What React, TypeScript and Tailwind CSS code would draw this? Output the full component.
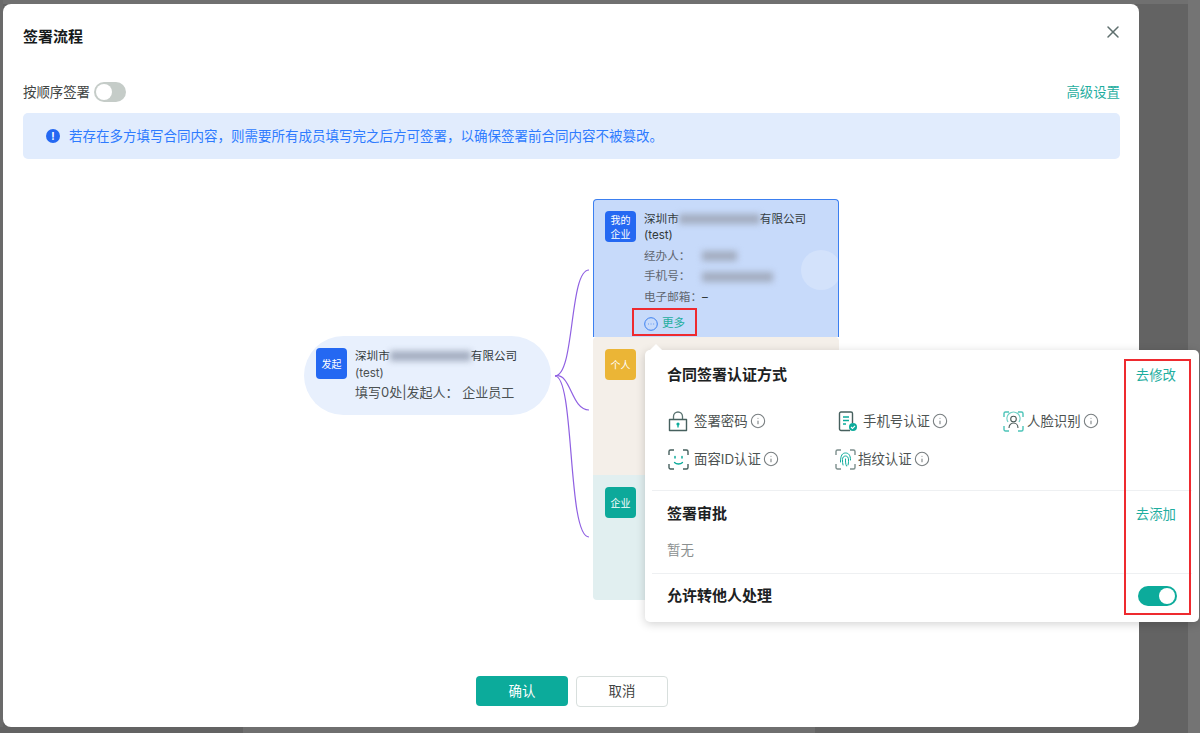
import { Info, X } from "lucide-react";
import type { ReactNode } from "react";

const FONT = "font-['Inter','Noto_Sans_CJK_SC',sans-serif]";

function Blur({ w }: { w: string }) {
  return <span className={`inline-block h-[10px] bg-[#a3adc0] blur-[3px] ${w}`} />;
}

function Badge({ color, children }: { color: string; children: ReactNode }) {
  return (
    <div className={`flex h-[31px] w-[31px] shrink-0 items-center justify-center rounded-[4px] text-center text-[10px] leading-[14px] text-white ${color}`}>
      {children}
    </div>
  );
}

function LockIcon() {
  return (
    <svg width="20" height="21" viewBox="0 0 20 21" fill="none">
      <path d="M5.5 8V5.5a4.500 4.500 0 0 1 9 0V8" stroke="#5b7472" strokeWidth="1.3" />
      <path d="M1.500 8.500h17v11h-17z" stroke="#46605e" strokeWidth="1.4" strokeLinejoin="round" />
      <circle cx="10" cy="13" r="1.600" fill="#0cab9b" />
      <path d="M10 13.500v3" stroke="#0cab9b" strokeWidth="1.4" />
    </svg>
  );
}

function DocIcon() {
  return (
    <svg width="20" height="21" viewBox="0 0 20 21" fill="none">
      <path d="M12 19.500H3a1.500 1.500 0 0 1-1.500-1.500V2.500A1.500 1.500 0 0 1 3 1h10a1.500 1.500 0 0 1 1.500 1.500V12" stroke="#46605e" strokeWidth="1.4" />
      <path d="M5 6h6M5 9.500h6M5 13h3" stroke="#0cab9b" strokeWidth="1.3" />
      <circle cx="15" cy="16" r="4" fill="#0cab9b" />
      <path d="M13 16l1.500 1.400 2.500-2.600" stroke="#fff" strokeWidth="1.100" />
    </svg>
  );
}

function Brackets({ color }: { color: string }) {
  return (
    <path
      d="M1 6V2.500A1.500 1.500 0 0 1 2.500 1H6M15 1h3.500A1.500 1.500 0 0 1 20 2.500V6M20 15v3.500a1.500 1.500 0 0 1-1.500 1.500H15M6 20H2.500A1.500 1.500 0 0 1 1 18.500V15"
      stroke={color}
      strokeWidth="1.4"
    />
  );
}

function FaceIdIcon() {
  return (
    <svg width="21" height="21" viewBox="0 0 21 21" fill="none">
      <Brackets color="#46605e" />
      <path d="M7 7.500v1.500M14 7.500v1.500" stroke="#0cab9b" strokeWidth="1.5" strokeLinecap="round" />
      <path d="M6.500 13.500c2 2 6 2 8 0" stroke="#0cab9b" strokeWidth="1.3" strokeLinecap="round" />
    </svg>
  );
}

function FingerprintIcon() {
  return (
    <svg width="21" height="21" viewBox="0 0 21 21" fill="none">
      <Brackets color="#7d8f8d" />
      <path d="M5.500 13c0-7 2-9 5-9s5 2 5 7M8 16c-.500-1.500-.500-3.500-.500-5.500 0-2 1-3.500 3-3.500s3 1.500 3 4 0 3.500-.500 5M10.500 10c0 3 0 5 1 7" stroke="#0cab9b" strokeWidth="1" strokeLinecap="round" />
    </svg>
  );
}

function FaceScanIcon() {
  return (
    <svg width="21" height="21" viewBox="0 0 21 21" fill="none">
      <Brackets color="#4cc4b8" />
      <path d="M5 11a6.500 6.500 0 1 1 11 0" stroke="#6fd0c6" strokeWidth="1.300" />
      <circle cx="10.500" cy="8" r="2.800" stroke="#4a5a58" strokeWidth="1.100" />
      <path d="M6 17c0-3 2-5 4.500-5s4.500 2 4.500 5" stroke="#4a5a58" strokeWidth="1.100" />
    </svg>
  );
}

function AuthItem({ icon, label, gap }: { icon: ReactNode; label: string; gap: string }) {
  return (
    <div className="flex h-[38px] items-center">
      {icon}
      <span className={`text-[13.4px] text-[#4d5352] ${gap}`}>{label}</span>
      <Info size={16} strokeWidth={1.6} className="ml-[2px] text-[#787e80]" />
    </div>
  );
}

export default function App() {
  return (
    <div className={`relative flex h-[733px] w-[1200px] overflow-hidden bg-[#636363] pl-[3px] pt-[4px] ${FONT}`}>
      {/* page behind the modal */}
      <div className="absolute inset-x-0 top-0 h-[4px] bg-[#707070]" />
      <div className="absolute bottom-0 left-[243px] h-[6px] w-[572px] bg-[#6f6f6f]" />
      <div className="absolute inset-y-0 left-0 h-[727px] w-[3px] bg-[#6a6a6a]" />
      <div className="absolute inset-y-0 right-0 w-[12px] bg-[#747474]" />

      <div className="relative flex h-[723px] w-[1136px] flex-col rounded-[8px] bg-white px-[20px]">
        <div className="flex h-[66px] items-start justify-between pt-[23px]">
          <h1 className="text-[15px] font-semibold leading-[20px] text-[#15191a]">签署流程</h1>
          <X size={20} strokeWidth={1.8} className="mr-[-4px] mt-[-5px] text-[#5f6f6e]" />
        </div>

        <div className="flex h-[43px] items-start justify-between pt-[12px]">
          <div className="flex items-center gap-[4px]">
            <span className="text-[13.4px] leading-[20px] text-[#3f4443]">按顺序签署</span>
            <div className="flex h-[20px] w-[32px] items-center rounded-full bg-[#c5ccc8] p-[2px]">
              <span className="h-[16px] w-[16px] rounded-full bg-white" />
            </div>
          </div>
          <span className="mr-[-1px] text-[13.4px] leading-[20px] text-[#1fae9f]">高级设置</span>
        </div>

        <div className="flex h-[46px] w-[1097px] shrink-0 items-center rounded-[5px] bg-[#e1ecfd] pl-[23px]">
          <div className="flex h-[14px] w-[14px] items-center justify-center rounded-full bg-[#2468f2] text-[10px] font-bold text-white">!</div>
          <span className="ml-[9px] text-[13.5px] text-[#2e7bff]">若存在多方填写合同内容，则需要所有成员填写完之后方可签署，以确保签署前合同内容不被篡改。</span>
        </div>

        {/* flow diagram */}
        <div className="mt-[40px] flex pl-[281px]">
          <div className="mt-[137px] flex h-[79px] w-[247px] shrink-0 rounded-full bg-[#e8f0fd] pl-[12px] pt-[12px]">
            <Badge color="bg-[#2468f2]">发起</Badge>
            <div className="ml-[8px]">
              <div className="flex h-[16px] items-center text-[11.6px] leading-[16px] text-[#32393a]">
                深圳市<Blur w="w-[81px]" />有限公司
              </div>
              <div className="text-[11.6px] leading-[18px] text-[#4b5152]">(test)</div>
              <div className="text-[13px] leading-[20px] text-[#4b5152]">填写0处|发起人： 企业员工</div>
            </div>
          </div>

          <svg width="42" height="401" viewBox="0 0 42 401" fill="none" className="shrink-0">
            <path d="M4 177C24 177 18 71 38 71" stroke="#8f60e2" strokeWidth="1.2" />
            <path d="M4 177C20 173 20 211 38 211" stroke="#8f60e2" strokeWidth="1.2" />
            <path d="M4 177C24 177 16 338 38 338" stroke="#8f60e2" strokeWidth="1.2" />
          </svg>

          <div className="flex w-[246px] shrink-0 flex-col">
            <div className="relative flex h-[138px] overflow-hidden rounded-t-[4px] border border-b-0 border-[#3b7ff0] bg-[#c7dafa] pl-[11px] pt-[11px]">
              <div className="absolute right-[-3px] top-[50px] h-[40px] w-[40px] rounded-full bg-[#d3e2fb]" />
              <Badge color="bg-[#2468f2]">
                我的
                <br />
                企业
              </Badge>
              <div className="relative ml-[8px] text-[11.6px] text-[#5f6670]">
                <div className="flex h-[16px] items-center leading-[16px] text-[#32393a]">
                  深圳市<Blur w="w-[81px]" />有限公司
                </div>
                <div className="leading-[16px] text-[#32393a]">(test)</div>
                <div className="mt-[3px] flex h-[20.5px] items-center">
                  <span className="w-[58px]">经办人：</span>
                  <Blur w="w-[35px]" />
                </div>
                <div className="flex h-[20.5px] items-center">
                  <span className="w-[58px]">手机号：</span>
                  <Blur w="w-[71px]" />
                </div>
                <div className="flex h-[20.5px] items-center">
                  <span className="w-[58px]">电子邮箱：</span>
                  <span className="text-[#32393a]">–</span>
                </div>
                <div className="mt-[6px] flex h-[20px] items-center">
                  <svg width="14" height="14" viewBox="0 0 14 14" fill="none">
                    <circle cx="7" cy="7" r="6.300" stroke="#3b7ff0" />
                    <path d="M4 7h.700M6.700 7h.700M9.400 7h.700" stroke="#3b7ff0" />
                  </svg>
                  <span className="ml-[4px] text-[#1fae9f]">更多</span>
                </div>
              </div>
            </div>
            <div className="h-[138px] rounded-t-[4px] bg-[#f4efe9] pl-[12px] pt-[12px]">
              <Badge color="bg-[#ebb536]">个人</Badge>
            </div>
            <div className="h-[125px] rounded-b-[4px] bg-[#e1eff0] pl-[12px] pt-[12px]">
              <Badge color="bg-[#0ca99a]">企业</Badge>
            </div>
          </div>
        </div>

        <div className="mt-auto flex justify-center gap-[8px] pb-[20px] pl-[2px]">
          <button className="h-[30px] w-[92px] rounded-[4px] bg-[#0cab9b] text-[13.4px] text-white">确认</button>
          <button className="h-[31px] w-[92px] rounded-[4px] border border-[#d8dfdd] bg-white text-[13.4px] text-[#3f4443]">取消</button>
        </div>
      </div>

      {/* popover from 更多 */}
      <div className="absolute left-[645px] top-[350px] w-[554px] rounded-[5px] bg-white shadow-[0_2px_10px_rgba(0,0,0,0.18)]">
        <div className="absolute left-[6px] top-[-4px] h-[10px] w-[10px] rotate-45 bg-white" />
        <div className="mx-[7px] border-b border-[#eef0f2] pb-[12px] pl-[15px] pr-[16px] pt-[14px]">
          <div className="flex h-[22px] items-center justify-between">
            <span className="text-[15px] font-semibold text-[#1c2122]">合同签署认证方式</span>
            <span className="text-[13.4px] text-[#1fae9f]">去修改</span>
          </div>
          <div className="mt-[16px] grid grid-cols-[167px_168px_1fr] pl-[1px]">
            <AuthItem icon={<LockIcon />} label="签署密码" gap="ml-[6px]" />
            <AuthItem icon={<span className="ml-[3px] flex"><DocIcon /></span>} label="手机号认证" gap="ml-[5px]" />
            <AuthItem icon={<FaceScanIcon />} label="人脸识别" gap="ml-[3px]" />
            <AuthItem icon={<FaceIdIcon />} label="面容ID认证" gap="ml-[5px]" />
            <AuthItem icon={<FingerprintIcon />} label="指纹认证" gap="ml-[2px]" />
          </div>
        </div>
        <div className="mx-[7px] border-b border-[#eef0f2] pb-[13px] pl-[15px] pr-[16px] pt-[12px]">
          <div className="flex h-[22px] items-center justify-between">
            <span className="text-[15px] font-semibold text-[#1c2122]">签署审批</span>
            <span className="text-[13.4px] text-[#1fae9f]">去添加</span>
          </div>
          <div className="mt-[15px] text-[13.4px] leading-[20px] text-[#8b9090]">暂无</div>
        </div>
        <div className="flex h-[48px] items-start justify-between pl-[22px] pr-[22px] pt-[11px]">
          <span className="text-[15px] font-semibold leading-[22px] text-[#1c2122]">允许转他人处理</span>
          <div className="mt-[1px] flex h-[20px] w-[39px] items-center justify-end rounded-full bg-[#0cab9b] p-[2px]">
            <span className="h-[16px] w-[16px] rounded-full bg-white" />
          </div>
        </div>
      </div>

      {/* red annotation boxes */}
      <div className="absolute left-[632px] top-[308px] h-[28px] w-[65px] border-2 border-[#ee2a2f]" />
      <div className="absolute left-[1124px] top-[359px] h-[256px] w-[67px] border-2 border-[#ee2a2f]" />
    </div>
  );
}
